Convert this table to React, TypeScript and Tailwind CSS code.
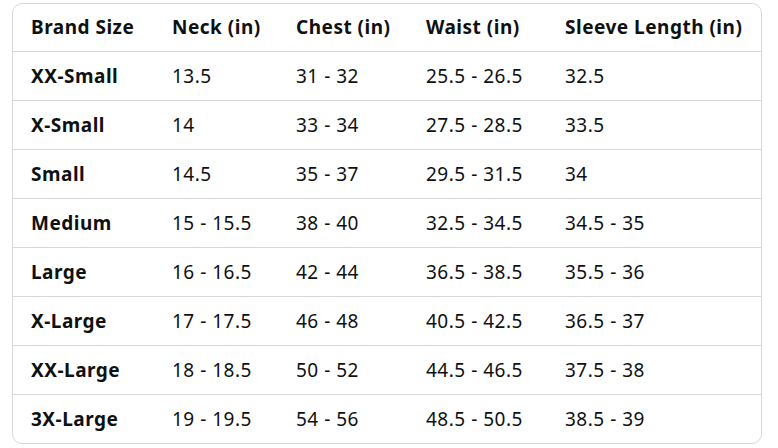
const headers = ["Brand Size", "Neck (in)", "Chest (in)", "Waist (in)", "Sleeve Length (in)"]

const rows = [
  ["XX-Small", "13.5", "31 - 32", "25.5 - 26.5", "32.5"],
  ["X-Small", "14", "33 - 34", "27.5 - 28.5", "33.5"],
  ["Small", "14.5", "35 - 37", "29.5 - 31.5", "34"],
  ["Medium", "15 - 15.5", "38 - 40", "32.5 - 34.5", "34.5 - 35"],
  ["Large", "16 - 16.5", "42 - 44", "36.5 - 38.5", "35.5 - 36"],
  ["X-Large", "17 - 17.5", "46 - 48", "40.5 - 42.5", "36.5 - 37"],
  ["XX-Large", "18 - 18.5", "50 - 52", "44.5 - 46.5", "37.5 - 38"],
  ["3X-Large", "19 - 19.5", "54 - 56", "48.5 - 50.5", "38.5 - 39"],
]

const cols = "grid grid-cols-[141px_124px_130px_139px_1fr] items-center pl-[18px] whitespace-nowrap"

export default function App() {
  return (
    <div className="bg-white w-[778px] h-[448px] pt-[3px] pl-[12px] font-['Noto_Sans',sans-serif] text-[#0f1111] text-[19px] tracking-[0.5px]">
      <div className="w-[750px] rounded-[10px] border border-[#d5d9d9] overflow-hidden">
        <div className={`${cols} h-[47px] font-bold`}>
          {headers.map((h) => (
            <div key={h}>{h}</div>
          ))}
        </div>
        {rows.map((r) => (
          <div key={r[0]} className={`${cols} h-[49px] border-t border-[#d5d9d9]`}>
            {r.map((c, i) => (
              <div key={i} className={i === 0 ? "font-bold" : ""}>
                {c}
              </div>
            ))}
          </div>
        ))}
      </div>
    </div>
  )
}
